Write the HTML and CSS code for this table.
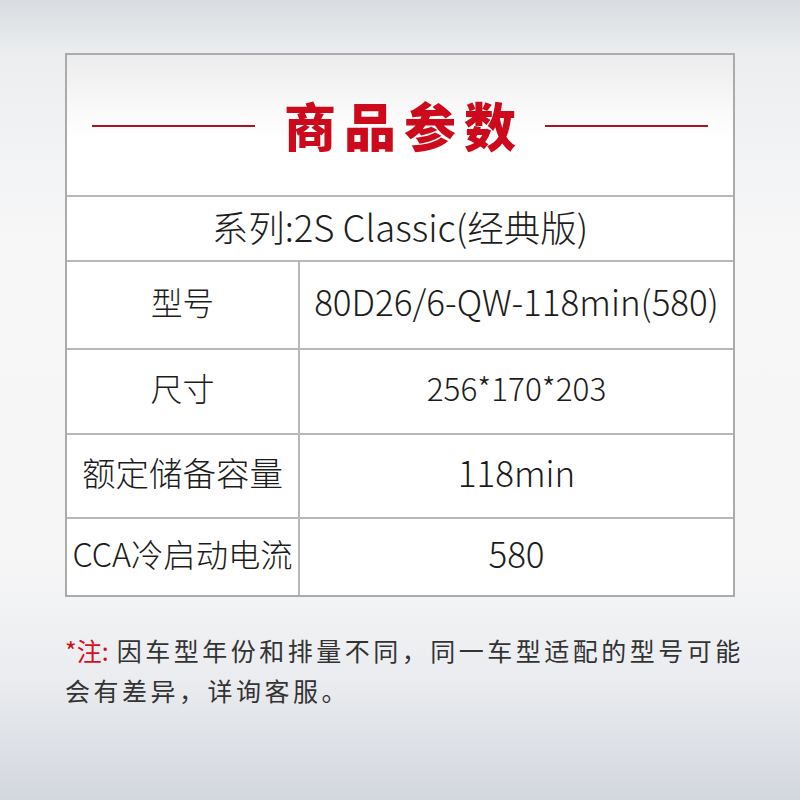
FILE: index.html
```html
<!DOCTYPE html>
<html lang="zh">
<head>
<meta charset="utf-8">
<link rel="stylesheet" href="styles.css">
</head>
<body>
<div class="page">
  <div class="card">
    <div class="head">
      <span class="rule"></span>
      <h1 class="title">商品参数</h1>
      <span class="rule"></span>
    </div>
    <div class="series">系列:2S Classic(经典版)</div>
    <div class="row r1"><div class="k s31">型号</div><div class="v s35">80D26/6-QW-118min(580)</div></div>
    <div class="row r2"><div class="k s32">尺寸</div><div class="v s31">256*170*203</div></div>
    <div class="row r3"><div class="k s33">额定储备容量</div><div class="v s35">118min</div></div>
    <div class="row r4"><div class="k s32b">CCA冷启动电流</div><div class="v s35">580</div></div>
  </div>
  <p class="note"><span class="red">*注:</span><span class="body-text">因车型年份和排量不同，同一车型适配的型号可能会有差异，详询客服。</span></p>
</div>
</body>
</html>
```
FILE: styles.css
```css
html, body {
  margin: 0;
  padding: 0;
}
body {
  width: 800px;
  height: 800px;
  overflow: hidden;
  font-family: "Noto Sans CJK SC", "Noto Sans", sans-serif;
  background: linear-gradient(180deg, #d8dce0 0%, #eceef0 7%, #f7f7f8 30%, #f6f6f7 70%, #eaecef 85%, #d3d7de 100%);
}
.page {
  padding: 53px 65px 0 65px;
}
.card {
  box-sizing: border-box;
  width: 670px;
  border: 2px solid #ababab;
  background: #fff;
}
.head {
  box-sizing: border-box;
  height: 140px;
  display: flex;
  align-items: center;
  justify-content: center;
  gap: 29px;
  background: linear-gradient(180deg, #ececec 0%, #f8f8f8 35%, #ffffff 60%);
}
.rule {
  width: 163px;
  height: 2px;
  background: #a8141f;
  margin-top: 2px;
}
.title {
  margin: 0;
  font-size: 52px;
  font-weight: 900;
  color: #cc0a1c;
  letter-spacing: 8px;
  margin-right: -8px;
  line-height: 1;
}
.series {
  box-sizing: border-box;
  height: 65px;
  padding-bottom: 4px;
  border-top: 2px solid #b8b8b8;
  display: flex;
  align-items: center;
  justify-content: center;
  font-size: 36.5px;
  font-weight: 300;
  color: #1e1e1e;
}
.row {
  box-sizing: border-box;
  display: grid;
  grid-template-columns: 233px 1fr;
  border-top: 2px solid #b8b8b8;
  color: #1c1c1c;
  font-weight: 300;
}
.r1 { height: 88px; }
.r2 { height: 85px; }
.r3 { height: 84px; }
.r4 { height: 78px; }
.k, .v {
  display: flex;
  align-items: center;
  justify-content: center;
  padding-bottom: 9px;
}
.k {
  border-right: 2px solid #b8b8b8;
}
.s31 { font-size: 31.5px; }
.s32 { font-size: 32px; }
.s32b { font-size: 32.3px; }
.s33 { font-size: 33.5px; }
.s35 { font-size: 35px; }
.note {
  margin: 33px 0 0 0;
  width: 690px;
  font-size: 25px;
  line-height: 40px;
  letter-spacing: 3.5px;
  color: #333;
}
.red {
  color: #d3101e;
  letter-spacing: 0;
  margin-right: 8px;
}
```
